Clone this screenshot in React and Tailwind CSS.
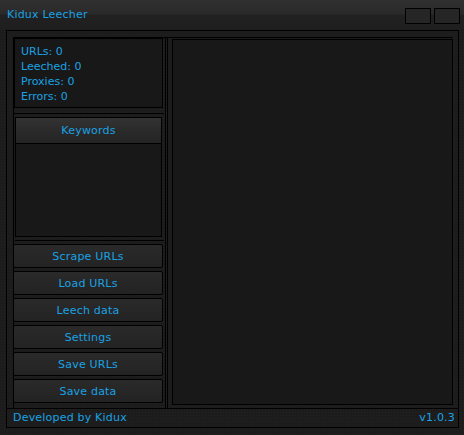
import React from 'react';

const stats = [
  ['URLs', 0],
  ['Leeched', 0],
  ['Proxies', 0],
  ['Errors', 0],
];

const actions = ['Scrape URLs', 'Load URLs', 'Leech data', 'Settings', 'Save URLs', 'Save data'];

const texture =
  'bg-[#1c1c1c] bg-[radial-gradient(#222222_1px,transparent_1px)] bg-[length:3px_3px]';

const ActionButton = ({ label }) => (
  <button className="h-[24px] w-[150px] rounded-[2px] border border-black bg-[linear-gradient(#2a2a2a,#232323)] text-[#1aa2e4] leading-none tracking-[0.2px]">
    {label}
  </button>
);

const App = () => {
  return (
    <div className={`w-[464px] h-[435px] ${texture} font-['DejaVu_Sans',sans-serif] text-[11px] text-[#1aa2e4] overflow-hidden`}>
      {/* title bar */}
      <div className="h-[30px] flex items-start justify-between pl-[7px] pr-[4px] bg-[linear-gradient(#303030,#2a2a2a_45%,#212121_52%,#1e1e1e)]">
        <span className="mt-[7px] leading-[16px] tracking-[0.2px]">Kidux Leecher</span>
        <div className="flex gap-[3px] mt-[8px]">
          <div className="w-[26px] h-[16px] border border-black bg-[#262626]" />
          <div className="w-[26px] h-[16px] border border-black bg-[#262626]" />
        </div>
      </div>

      {/* main frame */}
      <div className="ml-[6px] w-[453px] h-[398px] border border-black flex flex-col">
        <div className="ml-[6px] mt-[6px] w-[440px] h-[371px] border-l border-t border-black flex">
          {/* left column */}
          <div className="w-[150px] flex flex-col">
            <div className="w-[149px] h-[70px] border border-black bg-[#181818] pl-[6px] pt-[5px] leading-[15px]">
              {stats.map(([k, v]) => (
                <div key={k}>
                  {k}: {v}
                </div>
              ))}
            </div>
            <div className="mt-[5px] w-[150px] h-px bg-black" />
            <div className="mt-[3px] ml-[1px] w-[147px] h-[120px] border border-black bg-[#181818] flex flex-col">
              <div className="h-[26px] pt-[2px] border-b border-black bg-[linear-gradient(#333333,#2a2a2a_50%,#242424)] flex items-center justify-center tracking-[0.2px]">
                Keywords
              </div>
            </div>
            <div className="mt-[3px] ml-[1px] w-[149px] h-px bg-black" />
            <div className="mt-[3px] -ml-px flex flex-col gap-[3px]">
              {actions.map((a) => (
                <ActionButton key={a} label={a} />
              ))}
            </div>
          </div>

          {/* splitter */}
          <div className="ml-[1px] w-px h-full bg-black" />
          <div className="ml-[1px] w-px h-full bg-black" />

          {/* output area */}
          <div className="ml-[4px] mt-[1px] w-[281px] h-[366px] border border-black bg-[#181818]" />
        </div>

        {/* footer */}
        <div className="flex-1 border-t border-black flex items-center justify-between pl-[6px] pr-[3px] pt-px tracking-[0.2px]">
          <span>Developed by Kidux</span>
          <span>v1.0.3</span>
        </div>
      </div>
    </div>
  );
};

export default App;
